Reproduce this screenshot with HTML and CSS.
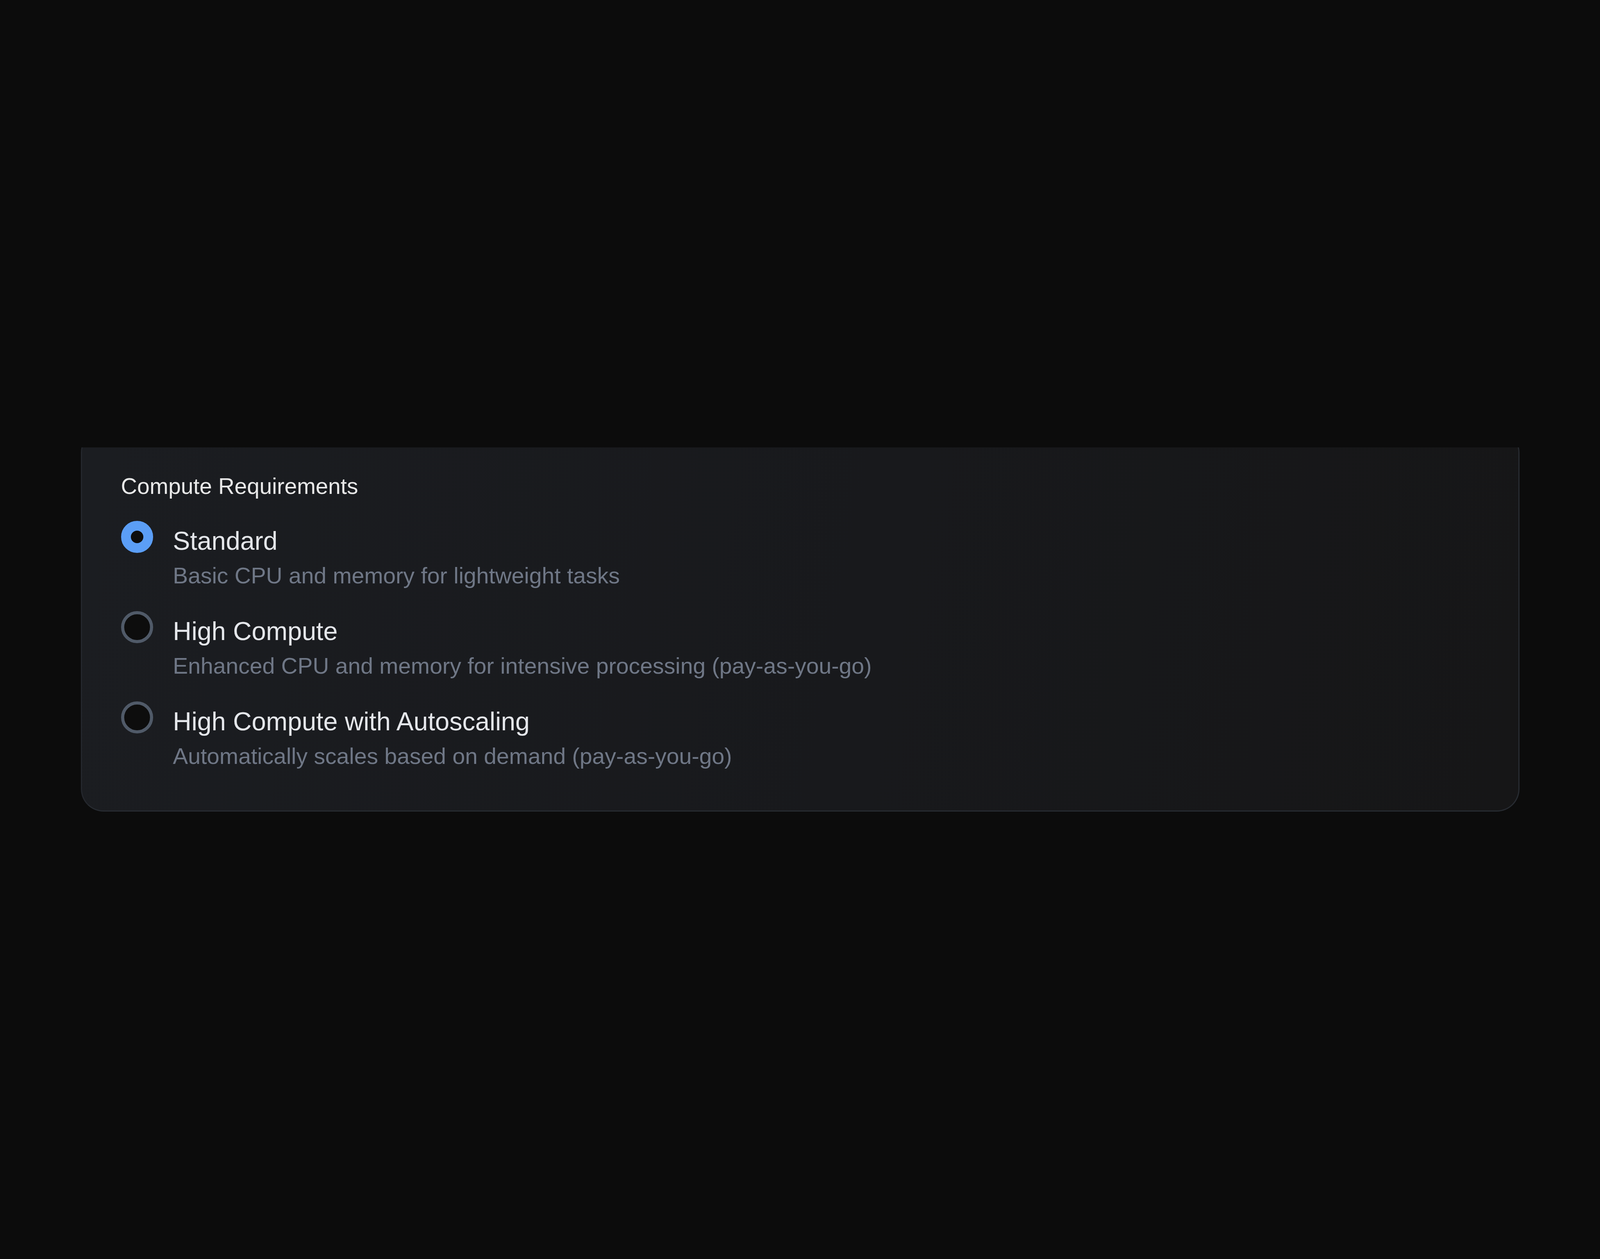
FILE: index.html
```html
<!DOCTYPE html>
<html lang="en">
<head>
<meta charset="utf-8">
<title>Compute Requirements</title>
<link rel="stylesheet" href="styles.css">
</head>
<body>
  <main class="stage">
    <div class="clip">
      <section class="card">
        <h2 class="title">Compute Requirements</h2>
        <div class="options">
          <label class="option">
            <span class="radio radio--on"></span>
            <span class="text">
              <span class="label">Standard</span>
              <span class="desc">Basic CPU and memory for lightweight tasks</span>
            </span>
          </label>
          <label class="option">
            <span class="radio"></span>
            <span class="text">
              <span class="label">High Compute</span>
              <span class="desc">Enhanced CPU and memory for intensive processing (pay-as-you-go)</span>
            </span>
          </label>
          <label class="option">
            <span class="radio"></span>
            <span class="text">
              <span class="label">High Compute with Autoscaling</span>
              <span class="desc">Automatically scales based on demand (pay-as-you-go)</span>
            </span>
          </label>
        </div>
      </section>
    </div>
  </main>
</body>
</html>
```

FILE: styles.css
```css
html, body {
  margin: 0;
  padding: 0;
  background: #0c0c0c;
}

body {
  font-family: "Liberation Sans", Arial, Helvetica, sans-serif;
}

.stage {
  min-height: 100vh;
  display: flex;
  align-items: center;
  justify-content: center;
}

.clip {
  width: 3683px;
  max-width: 100%;
  height: 932px;
  overflow: hidden;
}

.card {
  box-sizing: border-box;
  width: 100%;
  margin-top: -45px;
  padding: 100px 100px 98px 100px;
  border: 3px solid #24272d;
  border-right-color: #272b31;
  border-bottom-color: #272b31;
  border-radius: 58px;
  background: linear-gradient(100deg, #1b1d21 0%, #18191c 55%, #161617 100%);
}

.title {
  margin: 0 0 51px 0;
  font-size: 57.5px;
  line-height: 82px;
  font-weight: 400;
  color: #e8e8e8;
}

.options {
  display: flex;
  flex-direction: column;
  gap: 53px;
}

.option {
  display: flex;
  align-items: flex-start;
  gap: 51px;
}

.radio {
  box-sizing: border-box;
  flex: none;
  width: 82px;
  height: 82px;
  margin-top: -3px;
  border-radius: 50%;
  border: 8px solid #505a68;
  background: #0d0d0d;
}

.radio--on {
  border: 25px solid #5b9ef6;
  background: #0d0d0d;
}

.text {
  display: flex;
  flex-direction: column;
}

.label {
  font-size: 66px;
  line-height: 96px;
  color: #e4e6ea;
}

.desc {
  font-size: 58px;
  line-height: 82px;
  color: #6f7786;
}
```
